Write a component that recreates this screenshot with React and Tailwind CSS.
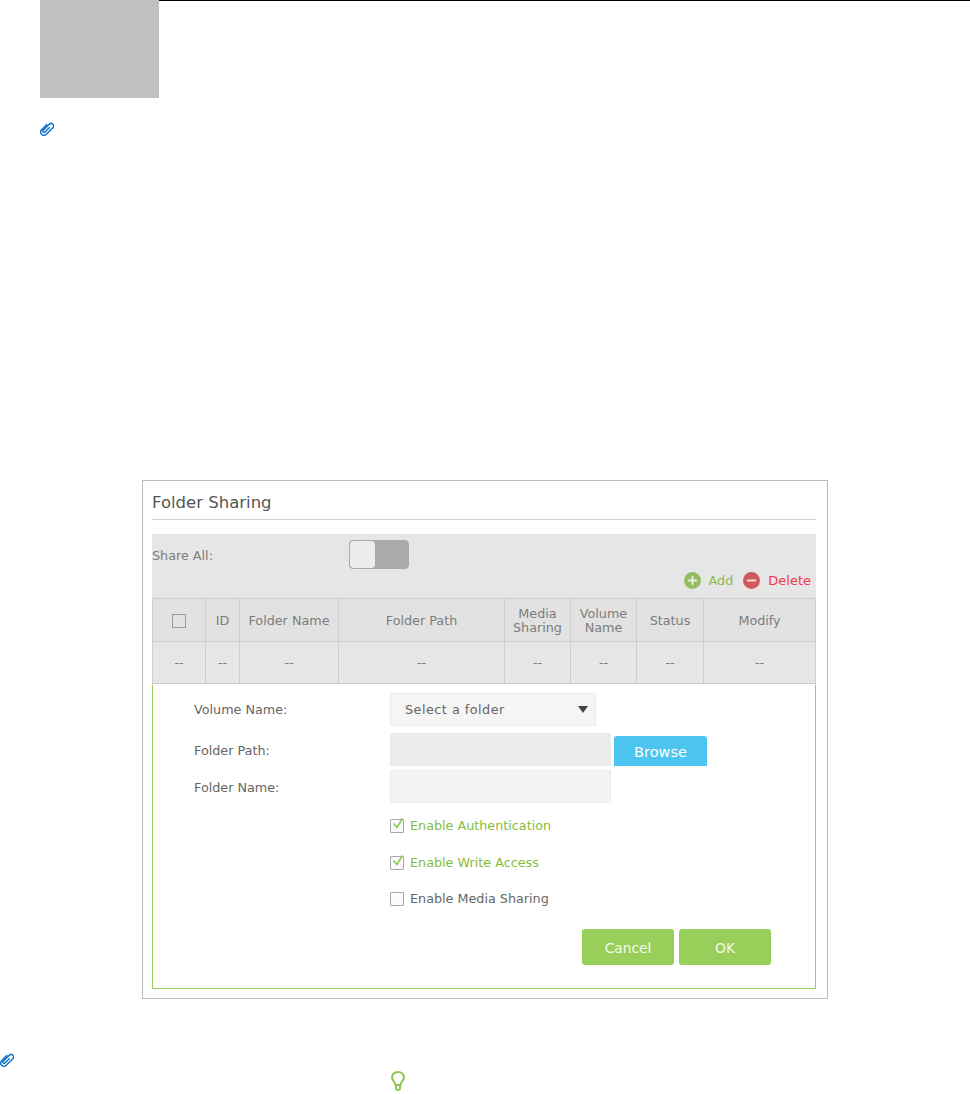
import { Plus, Minus } from "lucide-react";

function Clip({ className }) {
  return (
    <svg viewBox="0 0 14 14" className={className} fill="none" stroke="#1277c9" strokeWidth="1.5" strokeLinecap="round">
      <g transform="rotate(45 7 7)">
        <path d="M3.750 4V11.250a3.250 3.250 0 0 0 6.500 0V2a2.500 2.500 0 0 0-5 0V10.500a1.200 1.200 0 0 0 2.400 0V4.500" />
      </g>
    </svg>
  );
}

function Bulb() {
  return (
    <svg viewBox="0 0 14 20" className="block w-[14px] h-[20px]" fill="none" stroke="#8cc751" strokeWidth="2">
      <path d="M4.500 14C4.500 11 1 9.500 1 6.500a6 5.500 0 0 1 12 0C13 9.500 9.500 11 9.500 14Z" />
      <path d="M5 17a2 2 0 0 0 4 0V14H5Z" />
    </svg>
  );
}

function Check({ checked, label }) {
  return (
    <div className="flex items-center h-[14px]">
      <span className="relative w-[14px] h-[14px] border border-[#a8a8a8] bg-[#fbfbfb] rounded-[1px]">
        {checked && (
          <svg viewBox="0 0 14 14" className="absolute -top-[3px] left-0 w-[14px] h-[14px]" fill="none" stroke="#8cc751" strokeWidth="1.600">
            <path d="M2.500 6.500L6 10.500L11.500 1.500" />
          </svg>
        )}
      </span>
      <span className={`ml-[6px] ${checked ? "text-[#86bc3a]" : "text-[#666]"}`}>{label}</span>
    </div>
  );
}

const headers = [
  "",
  "ID",
  "Folder Name",
  "Folder Path",
  <>Media<br />Sharing</>,
  <>Volume<br />Name</>,
  "Status",
  "Modify",
];
const widths = ["w-[53px]", "w-[34px]", "w-[99px]", "w-[166px]", "w-[66px]", "w-[66px]", "w-[67px]", "w-[112px]"];

export default function App() {
  return (
    <div className="relative h-[1094px] overflow-hidden bg-white text-[12.750px] text-[#666]" style={{ fontFamily: '"DejaVu Sans", sans-serif' }}>
      <div className="flex items-start pl-[40px]">
        <div className="w-[119px] h-[98px] bg-[#bfc0bf]" />
        <div className="flex-1 h-px bg-black" />
      </div>
      <Clip className="block ml-[40px] mt-[24px] w-[14px] h-[14px]" />

      <div className="ml-[142px] mt-[344px] w-[686px] h-[519px] border border-[#bcbcbc] px-[9px] pt-[10px]">
        <h2 className="w-[664px] text-[16.500px] leading-[24px] text-[#555] border-b border-[#cfcfcf] h-[29px]">Folder Sharing</h2>

        <div className="mt-[14px] w-[664px] bg-[#e6e6e6]">
          <div className="relative h-[64px]">
            <span className="absolute left-0 top-[12px] text-[#7c7c7c]">Share All:</span>
            <div className="absolute left-[197px] top-[6px] flex w-[60px] h-[29px] rounded-[4px] border border-[#aaa] bg-[#aaa] overflow-hidden">
              <span className="w-[25px] bg-[#ececec] rounded-[4px]" />
            </div>
            <div className="absolute right-[5px] top-[37px] flex items-center">
              <span className="flex items-center justify-center w-[17px] h-[17px] rounded-full bg-[#93bf62]">
                <Plus size={13} strokeWidth={3.500} color="#e8f0de" />
              </span>
              <span className="ml-[8px] text-[#8dbb4c]">Add</span>
              <span className="ml-[10px] flex items-center justify-center w-[17px] h-[17px] rounded-full bg-[#cf5a5c]">
                <Minus size={13} strokeWidth={3.500} color="#f5dfdf" />
              </span>
              <span className="ml-[8px] text-[13px] text-[#f2384c]">Delete</span>
            </div>
          </div>

          <table className="w-full table-fixed border-collapse text-center text-[#7c7c7c]">
            <thead>
              <tr className="h-[43px] bg-[#e2e2e2]">
                {headers.map((h, i) => (
                  <th key={i} className={`${widths[i]} font-normal leading-[14px] border border-[#cdcdcd] p-0 pt-[2px]`}>
                    {i === 0 ? <span className="inline-block align-middle w-[14px] h-[14px] border border-[#9a9a9a]" /> : h}
                  </th>
                ))}
              </tr>
            </thead>
            <tbody>
              <tr className="h-[42px]">
                {headers.map((_, i) => (
                  <td key={i} className="border border-[#cdcdcd] p-0">--</td>
                ))}
              </tr>
            </tbody>
          </table>
        </div>

        <div className="w-[664px] h-[305px] border border-[#9ccf5f] border-t-white bg-white pl-[41px] pt-[8px]">
          <div className="flex">
            <div className="w-[196px] pt-[7px] text-[#666] flex flex-col">
              <span className="h-[41px]">Volume Name:</span>
              <span className="h-[37px]">Folder Path:</span>
              <span>Folder Name:</span>
            </div>
            <div className="flex flex-col">
              <div className="flex items-center justify-between w-[206px] h-[33px] bg-[#f5f5f5] border border-[#ebebeb] pl-[14px] pr-[7px] tracking-[0.5px]">
                <span className="pt-[1px]">Select a folder</span>
                <span className="w-0 h-0 border-x-[5px] border-x-transparent border-t-[7px] border-t-[#444]" />
              </div>
              <div className="flex mt-[7px]">
                <div className="w-[221px] h-[33px] bg-[#e9ebec]" />
                <button className="ml-[3px] mt-[3px] w-[93px] h-[30px] pt-[3px] rounded-t-[3px] bg-[#4cc5f0] text-white text-[14.500px]">Browse</button>
              </div>
              <div className="w-[221px] h-[33px] mt-[4px] bg-[#f4f4f4] border border-[#ebebeb]" />
              <div className="mt-[16px] flex flex-col gap-[22.500px]">
                <Check checked label="Enable Authentication" />
                <Check checked label="Enable Write Access" />
                <Check label="Enable Media Sharing" />
              </div>
            </div>
          </div>
          <div className="flex justify-end gap-[5px] mt-[23px] pr-[44px]">
            <button className="w-[92px] h-[36px] pt-[3px] rounded-[3px] bg-[#98cf5a] text-[#f4faeb] text-[13.800px]">Cancel</button>
            <button className="w-[92px] h-[36px] pt-[3px] rounded-[3px] bg-[#98cf5a] text-[#f4faeb] text-[13.800px]">OK</button>
          </div>
        </div>
      </div>

      <Clip className="block mt-[54px] w-[14px] h-[14px]" />
      <div className="ml-[391px] mt-[4px]"><Bulb /></div>
    </div>
  );
}
